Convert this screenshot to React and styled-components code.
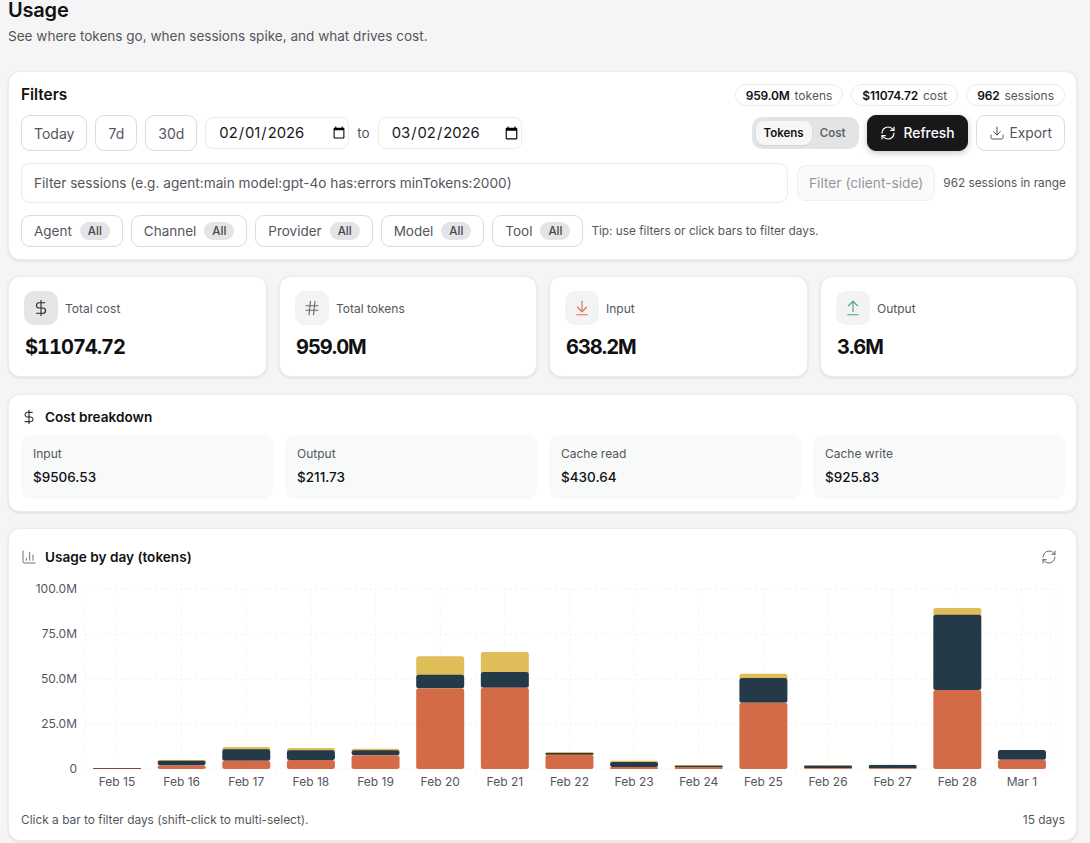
import React from 'react';
import styled, { createGlobalStyle } from 'styled-components';
import { ArrowDownToLine, ArrowUpFromLine, ChartColumn, DollarSign, Download, Hash, RefreshCw } from 'lucide-react';

const GlobalStyle = createGlobalStyle`
html, body {
  margin: 0;
  background: #f5f5f5;
  font-family: Inter, "Liberation Sans", sans-serif;
  color: #111113;
}
* { box-sizing: border-box; }
`;

const Page = styled.div`
width: 1090px;
height: 843px;
overflow: hidden;
padding: 0 13px 0 8px;
`;

const Title = styled.h1`
margin: 0;
font-size: 20px;
line-height: 20px;
font-weight: 600;
letter-spacing: -0.2px;
`;

const Subtitle = styled.p`
margin: 6px 0 0;
font-size: 13.55px;
line-height: 20px;
color: #55565c;
height: 45px;
`;

const Card = styled.section`
background: #fff;
border: 1px solid #ececec;
border-radius: 12px;
box-shadow: 0 1px 3px rgba(0, 0, 0, 0.1);
padding: 12px 11px 12px 12px;
margin-bottom: 16px;
`;

const Row = styled.div`
display: flex;
align-items: center;
gap: ${p => p.$gap || 8}px;
margin-top: ${p => p.$top || 0}px;
height: ${p => p.$height ? p.$height + 'px' : 'auto'};
`;

const CardName = styled.div`
font-size: 15.4px;
font-weight: 600;
margin: 0 auto 2px 0;
`;

const Pill = styled.div`
height: 22px;
padding: 0 10px;
display: flex;
align-items: center;
gap: 5px;
border: 1px solid #ececec;
border-radius: 11px;
font-size: 12px;
color: #55565c;
white-space: nowrap;
b { color: #111113; font-weight: 600; letter-spacing: -0.2px; }
`;

const Button = styled.button`
height: 36px;
padding: 0 12px;
display: flex;
align-items: center;
gap: 6px;
background: #fff;
border: 1px solid #dcdcde;
border-radius: 9px;
font: inherit;
font-size: 14px;
color: #55565c;
white-space: nowrap;
`;

const DateInput = styled.input`
width: 144px;
height: 32px;
padding: 0 0 0 12px;
background: #fff;
border: 1px solid #ececec;
border-radius: 8px;
font: inherit;
font-size: 14.8px;
color: #18181b;
`;

const To = styled.span`
font-size: 13.5px;
color: #55565c;
`;

const Toggle = styled.div`
margin-left: auto;
width: 107px;
height: 32px;
padding: 4px;
display: flex;
align-items: center;
background: #e3e4e5;
border-radius: 10px;
`;

const ToggleItem = styled.div`
height: 24px;
padding: 0 8px;
display: flex;
align-items: center;
border-radius: 8px;
font-size: 11.5px;
font-weight: 600;
background: ${p => p.$on ? '#f6f6f6' : 'transparent'};
color: ${p => p.$on ? '#111113' : '#63646a'};
box-shadow: ${p => p.$on ? '0 1px 2px rgba(0,0,0,0.08)' : 'none'};
`;

const RefreshButton = styled(Button)`
background: #18181b;
border-color: #18181b;
color: #fff;
font-size: 13.8px;
font-weight: 500;
gap: 8px;
box-shadow: 0 2px 6px rgba(0, 0, 0, 0.22);
`;

const ExportButton = styled(Button)`
font-size: 13.8px;
gap: 5px;
`;

const SearchBox = styled.input`
flex: 0 0 767px;
height: 40px;
padding: 0 12px;
background: #fff;
border: 1px solid #ececec;
border-radius: 9px;
font: inherit;
font-size: 13.67px;
&::placeholder { color: #55565c; opacity: 1; }
`;

const ClientButton = styled(Button)`
margin-left: 1px;
padding: 0 11px;
background: #fafafa;
border-color: #efefef;
color: #97979c;
font-size: 13.75px;
`;

const Muted = styled.span`
font-size: 11.8px;
color: #55565c;
white-space: nowrap;
`;

const Chip = styled.div`
height: 32px;
padding: 0 12px;
display: flex;
align-items: center;
gap: 8px;
background: #fff;
border: 1px solid #dcdcde;
border-radius: 9px;
font-size: 13.5px;
color: #55565c;
`;

const ChipTag = styled.span`
height: 18px;
padding: 0 8px;
display: flex;
align-items: center;
background: #e3e4e5;
border-radius: 9px;
font-size: 11.5px;
font-weight: 500;
color: #44454a;
`;

const StatGrid = styled.div`
display: grid;
grid-template-columns: 259px 258px 259px 257px;
gap: 12px;
margin-bottom: 17px;
`;

const StatCard = styled(Card)`
height: 101px;
padding: 14px 15px;
margin: 0;
`;

const StatTop = styled.div`
display: flex;
align-items: center;
gap: 7px;
font-size: 12px;
color: #55565c;
`;

const StatIcon = styled.div`
width: 34px;
height: 34px;
display: flex;
align-items: center;
justify-content: center;
border-radius: 10px;
background: ${p => p.$strong ? '#e5e5e6' : '#f3f3f3'};
color: ${p => p.$color};
`;

const StatValue = styled.div`
margin: 10px 0 0 1px;
font-size: 20px;
line-height: 24px;
font-weight: 700;
font-variant-numeric: tabular-nums;
letter-spacing: -1px;
`;

const SectionHead = styled.div`
display: flex;
align-items: center;
gap: 8px;
height: 20px;
font-size: 13.6px;
font-weight: 600;
`;

const CostGrid = styled.div`
display: grid;
grid-template-columns: repeat(4, 252px);
gap: 12px;
margin-top: 8px;
`;

const CostItem = styled.div`
height: 64px;
padding: 11px 12px;
background: #f8f9f9;
border-radius: 10px;
`;

const CostLabel = styled.div`
font-size: 12px;
line-height: 16px;
color: #55565c;
`;

const CostValue = styled.div`
margin-top: 6px;
font-size: 13.5px;
line-height: 18px;
font-weight: 500;
`;

const ChartCard = styled(Card)`
height: 313px;
margin: 0;
padding: 17px 11px 0 12px;
`;

const ChartHead = styled(SectionHead)`
height: 22px;
`;

const Spin = styled.div`
margin-left: auto;
margin-right: 8px;
display: flex;
color: #4a4b50;
`;

const ChartSvg = styled.svg`
display: block;
margin-top: 12px;
`;

const ChartFoot = styled.div`
display: flex;
justify-content: space-between;
margin-top: 17px;
font-size: 11.9px;
line-height: 16px;
color: #55565c;
`;

const ORANGE = '#d36b47';
const NAVY = '#253a49';
const GOLD = '#dfbd59';
const TOP = 9;
const BASE = 189;
const FIRST = 96;
const STEP = 64.64;

// [yellow top, navy top, orange top] in page pixels
const days = [
  ['Feb 15', 768, 768, 768],
  ['Feb 16', 760, 760.7, 765.5],
  ['Feb 17', 747, 749.3, 760.7],
  ['Feb 18', 748, 750.3, 760],
  ['Feb 19', 748.7, 750.3, 755.3],
  ['Feb 20', 656.3, 674.7, 688.3],
  ['Feb 21', 652, 672, 687.7],
  ['Feb 22', 752, 753, 754.7],
  ['Feb 23', 760.7, 762, 767],
  ['Feb 24', 765, 765.7, 767],
  ['Feb 25', 673.7, 678, 702.7],
  ['Feb 26', 765, 765.7, 768.3],
  ['Feb 27', 764.7, 765, 768.3],
  ['Feb 28', 608, 614.7, 690],
  ['Mar 1', 750, 750, 759.7],
];

const yLabels = ['100.0M', '75.0M', '50.0M', '25.0M', '0'];

function Segment({ x, top, bottom, fill }) {
  const h = Math.max(bottom - top, 0.8);
  return <rect x={x} y={top} width={48} height={h} rx={Math.min(2.5, h / 2)} fill={fill} />;
}

function UsageChart() {
  const gridY = yLabels.map((_, i) => TOP + i * 45);
  const offset = 580;
  return (
    <ChartSvg width="1044" height="215" viewBox="0 0 1044 215">
      {gridY.map(y => (
        <line key={y} x1="64" x2="1035" y1={y} y2={y} stroke="#efefef" strokeDasharray="2 3" />
      ))}
      {[64, ...days.map((_, i) => FIRST + i * STEP), 1035].map(x => (
        <line key={x} x1={x} x2={x} y1={TOP} y2={BASE} stroke="#f2f2f2" strokeDasharray="2 3" />
      ))}
      {yLabels.map((label, i) => (
        <text key={label} x="56" y={gridY[i] + 4} textAnchor="end" fontSize="12" fill="#55565c">{label}</text>
      ))}
      {days.map(([name, gold, navy, orange], i) => {
        const cx = FIRST + i * STEP;
        const x = cx - 24;
        return (
          <g key={name}>
            {navy > gold && <Segment x={x} top={gold - offset} bottom={navy - offset + 2} fill={GOLD} />}
            {orange > navy && <Segment x={x} top={navy - offset} bottom={orange - offset} fill={NAVY} />}
            <Segment x={x} top={orange - offset} bottom={BASE} fill={i === 0 ? '#7d4a38' : ORANGE} />
            <text x={cx} y={BASE + 17} textAnchor="middle" fontSize="12" fill="#55565c">{name}</text>
          </g>
        );
      })}
    </ChartSvg>
  );
}

const stats = [
  { label: 'Total cost', value: '$11074.72', Icon: DollarSign, color: '#2b2b2f', strong: true },
  { label: 'Total tokens', value: '959.0M', Icon: Hash, color: '#66676c' },
  { label: 'Input', value: '638.2M', Icon: ArrowDownToLine, color: '#d9704f' },
  { label: 'Output', value: '3.6M', Icon: ArrowUpFromLine, color: '#4fa08c' },
];

const costs = [
  ['Input', '$9506.53'],
  ['Output', '$211.73'],
  ['Cache read', '$430.64'],
  ['Cache write', '$925.83'],
];

function ChartBody() {
  return (
    <>
      <UsageChart />
      <ChartFoot>
        <span>Click a bar to filter days (shift-click to multi-select).</span>
        <span>15 days</span>
      </ChartFoot>
    </>
  );
}

export default function App() {
  return (
    <Page>
      <GlobalStyle />
      <Title>Usage</Title>
      <Subtitle>See where tokens go, when sessions spike, and what drives cost.</Subtitle>

      <Card>
        <Row $height={22}>
          <CardName>Filters</CardName>
          <Pill><b>959.0M</b> tokens</Pill>
          <Pill><b>$11074.72</b> cost</Pill>
          <Pill><b>962</b> sessions</Pill>
        </Row>
        <Row $top={9} $height={36}>
          <Button>Today</Button>
          <Button>7d</Button>
          <Button>30d</Button>
          <DateInput type="date" defaultValue="2026-02-01" />
          <To>to</To>
          <DateInput type="date" defaultValue="2026-03-02" />
          <Toggle>
            <ToggleItem $on>Tokens</ToggleItem>
            <ToggleItem>Cost</ToggleItem>
          </Toggle>
          <RefreshButton><RefreshCw size={16} strokeWidth={1.75} />Refresh</RefreshButton>
          <ExportButton><Download size={16} strokeWidth={1.5} />Export</ExportButton>
        </Row>
        <Row $top={12} $height={40}>
          <SearchBox placeholder="Filter sessions (e.g. agent:main model:gpt-4o has:errors minTokens:2000)" />
          <ClientButton>Filter (client-side)</ClientButton>
          <Muted>962 sessions in range</Muted>
        </Row>
        <Row $top={12} $height={32}>
          {['Agent', 'Channel', 'Provider', 'Model', 'Tool'].map(name => (
            <Chip key={name}>{name}<ChipTag>All</ChipTag></Chip>
          ))}
          <Muted>Tip: use filters or click bars to filter days.</Muted>
        </Row>
      </Card>

      <StatGrid>
        {stats.map(({ label, value, Icon, color, strong }) => (
          <StatCard key={label}>
            <StatTop>
              <StatIcon $strong={strong} $color={color}><Icon size={18} strokeWidth={1.5} /></StatIcon>
              {label}
            </StatTop>
            <StatValue>{value}</StatValue>
          </StatCard>
        ))}
      </StatGrid>

      <Card>
        <SectionHead><DollarSign size={16} strokeWidth={1.5} />Cost breakdown</SectionHead>
        <CostGrid>
          {costs.map(([label, value]) => (
            <CostItem key={label}>
              <CostLabel>{label}</CostLabel>
              <CostValue>{value}</CostValue>
            </CostItem>
          ))}
        </CostGrid>
      </Card>

      <ChartCard>
        <ChartHead>
          <ChartColumn size={16} strokeWidth={1.25} color="#55565c" />
          Usage by day (tokens)
          <Spin><RefreshCw size={16} strokeWidth={1.25} /></Spin>
        </ChartHead>
        <ChartBody />
      </ChartCard>
    </Page>
  );
}
